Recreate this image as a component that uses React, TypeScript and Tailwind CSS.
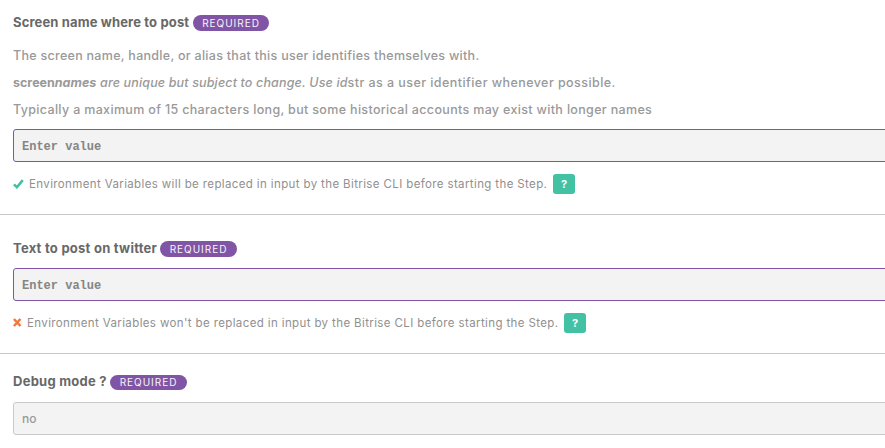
import type { ReactNode } from "react";

function Badge({ className }: { className: string }) {
  return (
    <span
      className={`flex items-center justify-center rounded-full bg-[#8155a6] text-[10px] tracking-[0.97px] text-[#f8f4fb] ${className}`}
    >
      REQUIRED
    </span>
  );
}

function Title({ children }: { children: ReactNode }) {
  return <h2 className="text-[13px] leading-4 font-bold text-[#686868]">{children}</h2>;
}

function Field({ children, className }: { children: ReactNode; className: string }) {
  return (
    <div className={`-mr-2 ml-[13px] flex h-[33px] items-center rounded-[3px] border bg-[#f3f3f3] pl-2 ${className}`}>
      {children}
    </div>
  );
}

function Placeholder() {
  return (
    <span className="pt-[2px] font-['Liberation_Mono',monospace] text-[12px] font-bold text-[#858585]">Enter value</span>
  );
}

function Help() {
  return (
    <button className="flex h-5 w-[22px] items-center justify-center rounded-[3px] bg-[#43c1a3] pt-px text-[11px] font-bold text-white">
      ?
    </button>
  );
}

function Check() {
  return (
    <svg className="h-[10px] w-[11px]" viewBox="0 0 11 10">
      <path d="M0.9 5.4 3.9 8.2 9.8 1.1" fill="none" stroke="#3ec1a1" strokeWidth="2.5" />
    </svg>
  );
}

function Cross() {
  return (
    <svg className="mb-px h-[9px] w-[9px]" viewBox="0 0 9 9">
      <path d="M0.9 1 7.5 8M7.5 1 0.9 8" fill="none" stroke="#f0793a" strokeWidth="2.5" />
    </svg>
  );
}

export default function App() {
  return (
    <main className="h-[448px] w-[885px] overflow-hidden bg-white font-['Inter',sans-serif] whitespace-nowrap">
      <section className="h-[215px] border-b border-[#c9c9c9] pt-[13px]">
        <div className="flex h-[20px] items-center pl-[13px]">
          <div className="w-[180px] pb-[2px] tracking-[0.14px]"><Title>Screen name where to post</Title></div>
          <Badge className="h-4 w-[76px]" />
        </div>
        <div className="mt-[9px] h-[87px] pl-[13px] text-[12.5px] leading-[27px] font-medium text-[#999]">
          <p className="tracking-[0.285px]">The screen name, handle, or alias that this user identifies themselves with.</p>
          <p className="tracking-[0.44px]">
            <strong className="tracking-[0px]">screen<em>names</em></strong>{" "}
            <em className="tracking-[0.15px]">are unique but subject to change. Use id</em>str as a user identifier whenever possible.
          </p>
          <p className="tracking-[0.335px]">Typically a maximum of 15 characters long, but some historical accounts may exist with longer names</p>
        </div>
        <Field className="border-[#8155a6]"><Placeholder /></Field>
        <div className="mt-3 flex h-5 items-center pl-[13px] text-[11.5px] text-[#909090]">
          <Check />
          <span className="ml-[5px] w-[524px] pt-px tracking-[0.375px]">Environment Variables will be replaced in input by the Bitrise CLI before starting the Step.</span>
          <Help />
        </div>
      </section>
      <section className="h-[139px] border-b border-[#c9c9c9] pt-[24px]">
        <div className="flex h-[20px] items-center pl-[13px]">
          <div className="w-[147px] pb-[2px] tracking-[0.25px]"><Title>Text to post on twitter</Title></div>
          <Badge className="h-4 w-[77px]" />
        </div>
        <Field className="mt-[9px] border-[#8155a6]"><Placeholder /></Field>
        <div className="mt-3 flex h-5 items-center pl-[13px] text-[11.5px] text-[#909090]">
          <Cross />
          <span className="ml-[5px] w-[537px] pt-px tracking-[0.38px]">Environment Variables won't be replaced in input by the Bitrise CLI before starting the Step.</span>
          <Help />
        </div>
      </section>
      <section className="pt-[18px]">
        <div className="flex h-[20px] items-center pl-[13px]">
          <div className="w-[97px] pb-[2px] tracking-[0.25px]"><Title>Debug mode ?</Title></div>
          <Badge className="h-[15px] w-[77px]" />
        </div>
        <Field className="mt-[10px] border-[#c9c9c9]"><span className="text-[12px] font-medium text-[#999]">no</span></Field>
      </section>
    </main>
  );
}
